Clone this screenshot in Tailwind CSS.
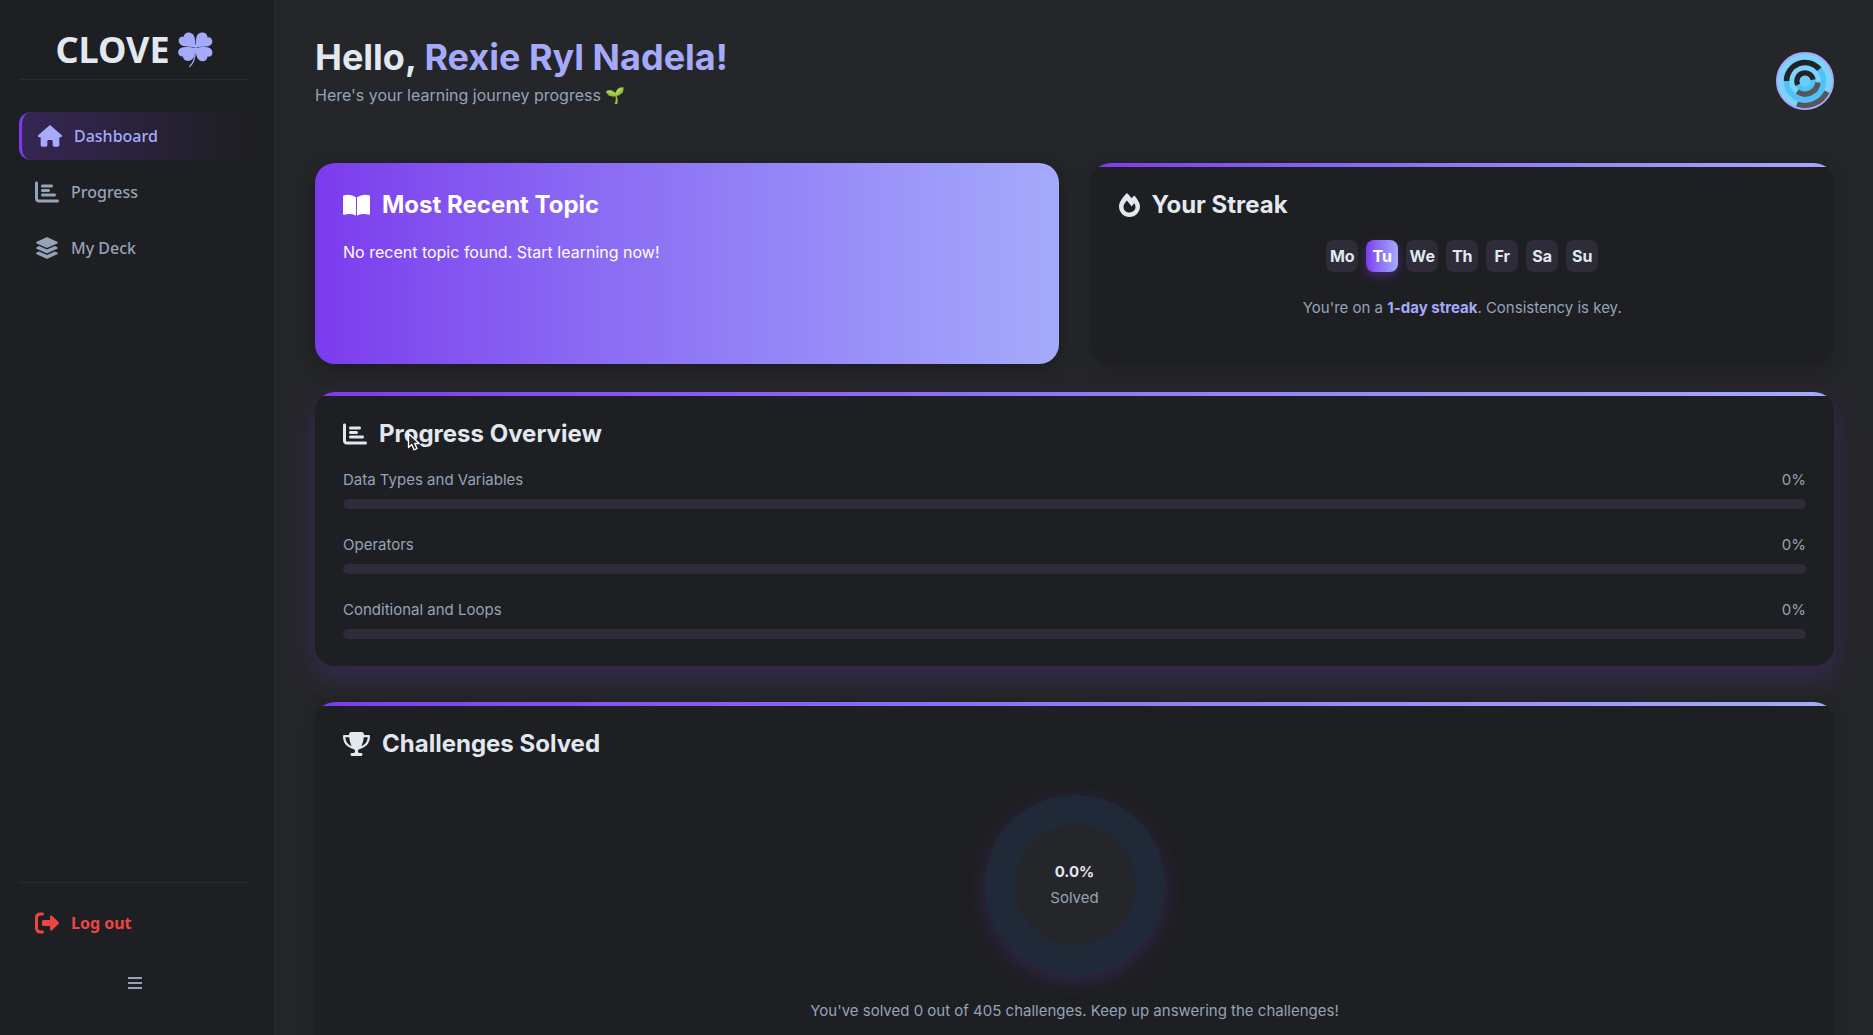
<!DOCTYPE html>
<html lang="en">
<head>
<meta charset="utf-8">
<title>Clove – Dashboard</title>
<script src="https://cdn.jsdelivr.net/npm/@tailwindcss/browser@4"></script>
</head>
<body class="flex h-screen overflow-hidden bg-[#25262a] font-['Inter',sans-serif] text-[#e2e8f0]">

<aside class="flex w-[275px] shrink-0 flex-col border-r border-[#2a2b2f] bg-[#1e1f22] pr-6 pl-[19px] font-['Noto_Sans',sans-serif]">
  <div class="flex h-20 items-center justify-center gap-2 border-b border-[#2a2b2f] pt-5">
    <span class="text-4xl font-bold">CLOVE</span>
    <svg class="size-9" viewBox="0 0 36 36" fill="#a5aafb" aria-hidden="true">
      <path d="M17.300 15.700C13 14.500 7 15.500 3 13C.5 11 0 8 1.500 6C2.500 4.500 4.500 4.500 5.500 5C6 1.500 9 0 12 .7C17.500 2 17.300 8 17.300 15.700Z"/>
      <path d="M17.800 15.700C17.800 8 17.500 2 22.500 .8C26.500 0 29.500 2 29.500 5.500C32 4.800 34 6.500 34.300 9C34.500 13 31 14.500 28 14.500C24 15 21 14.500 17.800 15.700Z"/>
      <path d="M17.300 16.200C13 15 6 14.500 2.500 16.200C-.5 18 -.3 22 1.500 23.500C3 24.700 4.500 24.500 5 24.500C5 27.500 8 29.500 11 28.800C16.500 27.500 17.300 22 17.300 16.200Z"/>
      <path d="M17.800 16.200C21 15 29 14.500 32 16.200C35 18 35 22.500 33 24C31.500 25 30.500 24.500 29.500 24.500C29.500 28 27 29.500 24 29.200C18.500 28.500 17.800 22 17.800 16.200Z"/>
      <path d="M17.500 13V18C17.500 25 15.500 31 11.700 34.500" fill="none" stroke="#a5aafb" stroke-width="1.200" stroke-linecap="round"/>
    </svg>
  </div>

  <nav class="mt-8 flex flex-col gap-2 font-medium text-[#94a3b8]">
    <a href="#dashboard" class="flex h-12 items-center gap-3 rounded-xl border-l-3 border-[#7c3aed] bg-linear-to-r from-[#7c3aed]/25 to-transparent pl-4 text-[#a5aafb]">
      <svg class="h-[22px] w-6" viewBox="0 0 576 512" fill="currentColor" aria-hidden="true"><path d="M575.800 255.500c0 18-15 32.100-32 32.100h-32l.7 160.200c0 2.700-.2 5.400-.5 8.100V472c0 22.100-17.900 40-40 40H416 392c-22.100 0-40-17.900-40-40V448 384c0-17.700-14.300-32-32-32H256c-17.700 0-32 14.300-32 32v64 24c0 22.100-17.900 40-40 40H104c-22.100 0-40-17.900-40-40V287.600H32c-18 0-32-14-32-32.100 0-9 3-17 10-24L266.400 8c7-7 15-8 22-8s15 2 21 7L564.800 231.500c8 7 12 15 11 24z"/></svg>
      Dashboard
    </a>
    <a href="#progress" class="flex h-12 items-center gap-3 pl-4">
      <svg class="size-6" viewBox="0 0 512 512" fill="currentColor" aria-hidden="true"><path d="M32 32c17.700 0 32 14.300 32 32V400c0 8.800 7.200 16 16 16H480c17.700 0 32 14.300 32 32s-14.300 32-32 32H80c-44.200 0-80-35.800-80-80V64C0 46.300 14.300 32 32 32zm96 96c0-17.700 14.300-32 32-32H352c17.700 0 32 14.300 32 32s-14.300 32-32 32H160c-17.700 0-32-14.300-32-32zm32 64H288c17.700 0 32 14.300 32 32s-14.300 32-32 32H160c-17.700 0-32-14.300-32-32s14.300-32 32-32zm0 96H416c17.700 0 32 14.300 32 32s-14.300 32-32 32H160c-17.700 0-32-14.300-32-32s14.300-32 32-32z"/></svg>
      Progress
    </a>
    <a href="#deck" class="flex h-12 items-center gap-3 pl-4">
      <svg class="size-6" viewBox="0 0 512 512" fill="currentColor" aria-hidden="true"><path transform="translate(25 25) scale(.9)" d="M12.410 148.020l232.940 105.670c6.800 3.090 14.490 3.090 21.290 0l232.940-105.670c16.550-7.510 16.550-32.520 0-40.030L266.650 2.310a25.607 25.607 0 0 0-21.290 0L12.410 107.980c-16.550 7.510-16.550 32.530 0 40.040zm487.180 88.280l-58.090-26.330-161.640 73.270c-7.560 3.430-15.590 5.170-23.860 5.170s-16.290-1.740-23.860-5.170L70.510 209.970l-58.100 26.330c-16.550 7.500-16.550 32.500 0 40l232.940 105.590c6.800 3.080 14.490 3.080 21.290 0L499.590 276.300c16.550-7.500 16.550-32.500 0-40zm0 127.800l-57.870-26.230-161.860 73.370c-7.560 3.430-15.590 5.170-23.860 5.170s-16.290-1.740-23.860-5.170L70.290 337.870 12.410 364.100c-16.550 7.500-16.550 32.500 0 40l232.940 105.590c6.800 3.080 14.490 3.080 21.290 0L499.590 404.100c16.550-7.500 16.550-32.500 0-40z"/></svg>
      My Deck
    </a>
  </nav>

  <div class="mt-auto flex flex-col items-center border-t border-[#2a2b2f] pt-4 pb-9">
    <button type="button" class="flex h-12 w-full items-center gap-3 pl-4 font-bold text-[#ef4444]">
      <svg class="size-6" viewBox="0 0 24 24" aria-hidden="true"><path d="M7.500 3H5.500Q1.500 3 1.500 7V17Q1.500 21 5.500 21H7.500" fill="none" stroke="currentColor" stroke-width="3" stroke-linecap="round"/><path d="M8.500 9H15V5.500Q15.500 4 17 4.800L23.500 11Q24.300 12 23.500 13L17 19.200Q15.500 20 15 18.500V15H8.500Q7 15 7 13.500V10.500Q7 9 8.500 9Z" fill="currentColor"/></svg>
      Log out
    </button>
    <button type="button" aria-label="Collapse menu" class="mt-5 flex size-8 items-center justify-center text-[#94a3b8]">
      <svg class="h-3 w-[14px]" viewBox="0 0 14 12" fill="currentColor" aria-hidden="true"><path d="M0 0h14v2H0zM0 5h14v2H0zM0 10h14v2H0z"/></svg>
    </button>
  </div>
</aside>

<main class="min-w-0 flex-1 overflow-hidden pt-8 pr-[39px] pl-10">
  <header class="flex items-start justify-between">
    <div>
      <h1 class="text-4xl leading-[50px] font-bold">Hello, <span class="text-[#a5aafb]">Rexie Ryl Nadela!</span></h1>
      <p class="text-base leading-[26px] text-[#94a3b8]">Here's your learning journey progress 🌱</p>
    </div>
    <svg class="mt-5 size-[58px]" viewBox="0 0 58 58" role="img" aria-label="Profile picture">
      <circle cx="29" cy="29" r="28" fill="#7dd3fc" stroke="#a5aafb" stroke-width="2"/>
      <g fill="none" stroke-width="5.500">
        <path d="M43.300 17.300A18.500 18.500 0 1 1 10.500 29" stroke="#4fc3f7"/>
        <path d="M10.500 29A18.500 18.500 0 0 1 43.300 17.300" stroke="#222326"/>
        <path d="M36.900 27.700A8 8 0 0 1 21.900 32.700" stroke="#4fc3f7"/>
        <path d="M21.900 32.700A8 8 0 1 1 36.900 27.700" stroke="#222326"/>
        <path d="M42 30.400A13 13 0 0 1 21.200 39.400" stroke="#55575c"/>
        <path d="M51 39.800A24.500 24.500 0 0 1 21 52" stroke="#55575c"/>
      </g>
      <circle cx="29" cy="29" r="5.500" fill="#6ccdf9"/>
    </svg>
  </header>

  <div class="mt-[53px] grid grid-cols-2 gap-8">
    <section class="h-[201px] rounded-[20px] bg-linear-to-r from-[#7c3aed] to-[#a5aafb] px-7 pt-6 text-white shadow-[0_4px_20px_rgb(0_0_0/0.3)]">
      <h2 class="flex h-9 items-center gap-3 text-2xl font-bold">
        <svg class="h-6 w-[27px]" viewBox="0 0 27 24" fill="currentColor" aria-hidden="true"><path d="M13 4.200V22.500Q7 20 1.200 21.700Q0 22 0 20.500V3.500Q0 2.500 1 2.200Q8 .500 13 4.200ZM14 4.200Q19 .500 26 2.200Q27 2.500 27 3.500V20.500Q27 22 25.800 21.700Q20 20 14 22.500Z"/></svg>
        Most Recent Topic
      </h2>
      <p class="mt-4 leading-[26px]">No recent topic found. Start learning now!</p>
    </section>

    <section class="h-[201px] overflow-hidden rounded-[20px] bg-[#1e1f22] shadow-[0_4px_20px_rgb(0_0_0/0.2)]">
      <div class="h-1 bg-linear-to-r from-[#7c3aed] to-[#a5aafb]"></div>
      <div class="px-7 pt-5">
        <h2 class="flex h-9 items-center gap-3 text-2xl font-bold">
          <svg class="h-6 w-[21px]" viewBox="0 0 448 512" fill="currentColor" aria-hidden="true"><path d="M323.560 51.200c-20.800 19.300-39.580 39.590-56.220 59.970C240.080 73.620 206.280 35.530 168 0 69.740 91.170 0 209.960 0 281.600 0 408.850 100.290 512 224 512s224-103.150 224-230.400c0-53.270-51.980-163.140-124.440-230.400zm-19.470 340.650C282.430 407.010 255.720 416 226.860 416 154.710 416 96 368.260 96 290.750c0-38.610 24.310-72.630 72.790-130.750 6.930 7.980 98.830 125.340 98.830 125.340l58.630-66.880c4.140 6.850 7.910 13.550 11.270 19.970 27.350 52.190 15.810 118.970-33.430 153.420z"/></svg>
          Your Streak
        </h2>
        <ul class="mt-[17px] flex justify-center gap-2 font-bold">
          <li class="grid size-8 place-items-center rounded-lg bg-[#2d2c38]">Mo</li>
          <li class="grid size-8 place-items-center rounded-lg bg-linear-to-r from-[#7c3aed] to-[#a5aafb] text-white shadow-[0_4px_10px_rgb(124_58_237/0.4)]">Tu</li>
          <li class="grid size-8 place-items-center rounded-lg bg-[#2d2c38]">We</li>
          <li class="grid size-8 place-items-center rounded-lg bg-[#2d2c38]">Th</li>
          <li class="grid size-8 place-items-center rounded-lg bg-[#2d2c38]">Fr</li>
          <li class="grid size-8 place-items-center rounded-lg bg-[#2d2c38]">Sa</li>
          <li class="grid size-8 place-items-center rounded-lg bg-[#2d2c38]">Su</li>
        </ul>
        <p class="mt-6 text-center text-[15px] leading-6 text-[#94a3b8]">You're on a <strong class="font-bold text-[#a5aafb]">1-day streak</strong>. Consistency is key.</p>
      </div>
    </section>
  </div>

  <section class="mt-7 h-[274px] overflow-hidden rounded-[20px] bg-[#1e1f22] shadow-[0_12px_28px_rgb(124_58_237/0.2)]">
    <div class="h-1 bg-linear-to-r from-[#7c3aed] to-[#a5aafb]"></div>
    <div class="px-7 pt-5">
      <div class="relative">
        <h2 class="flex h-9 items-center gap-3 text-2xl font-bold">
          <svg class="size-6" viewBox="0 0 512 512" fill="currentColor" aria-hidden="true"><path d="M32 32c17.700 0 32 14.300 32 32V400c0 8.800 7.200 16 16 16H480c17.700 0 32 14.300 32 32s-14.300 32-32 32H80c-44.200 0-80-35.800-80-80V64C0 46.300 14.300 32 32 32zm96 96c0-17.700 14.300-32 32-32H352c17.700 0 32 14.300 32 32s-14.300 32-32 32H160c-17.700 0-32-14.300-32-32zm32 64H288c17.700 0 32 14.300 32 32s-14.300 32-32 32H160c-17.700 0-32-14.300-32-32s14.300-32 32-32zm0 96H416c17.700 0 32 14.300 32 32s-14.300 32-32 32H160c-17.700 0-32-14.300-32-32s14.300-32 32-32z"/></svg>
          Progress Overview
        </h2>
        <svg class="absolute top-4 left-16 h-5 w-4" viewBox="0 0 16 20" aria-hidden="true"><path d="M1.500 1.500V15.500L4.800 12.500L7 17.800L10 16.500L7.800 11.500H12.300Z" fill="#2b2b2f" stroke="#fff" stroke-width="1.300" stroke-linejoin="round"/></svg>
      </div>
      <div class="mt-4 flex flex-col gap-6 text-[15px] leading-6 text-[#94a3b8]">
        <div>
          <div class="flex justify-between"><span>Data Types and Variables</span><span>0%</span></div>
          <div class="mt-[7px] h-2.5 rounded-full bg-[#2d2c38]" role="progressbar" aria-label="Data Types and Variables" aria-valuenow="0"></div>
        </div>
        <div>
          <div class="flex justify-between"><span>Operators</span><span>0%</span></div>
          <div class="mt-[7px] h-2.5 rounded-full bg-[#2d2c38]" role="progressbar" aria-label="Operators" aria-valuenow="0"></div>
        </div>
        <div>
          <div class="flex justify-between"><span>Conditional and Loops</span><span>0%</span></div>
          <div class="mt-[7px] h-2.5 rounded-full bg-[#2d2c38]" role="progressbar" aria-label="Conditional and Loops" aria-valuenow="0"></div>
        </div>
      </div>
    </div>
  </section>

  <section class="mt-9 overflow-hidden rounded-[20px] bg-[#1e1f22] shadow-[0_4px_20px_rgb(0_0_0/0.2)]">
    <div class="h-1 bg-linear-to-r from-[#7c3aed] to-[#a5aafb]"></div>
    <div class="flex flex-col px-7 pt-5 pb-7">
      <h2 class="flex h-9 items-center gap-3 text-2xl font-bold">
        <svg class="h-6 w-[27px]" viewBox="0 0 576 512" fill="currentColor" aria-hidden="true"><path d="M400 0H176c-26.500 0-48.100 21.800-47.100 48.200c.2 5.300 .4 10.600 .7 15.800H24C10.700 64 0 74.700 0 88c0 92.600 33.500 157 78.500 200.700c44.300 43.100 98.300 64.800 138.100 75.800c23.400 6.500 39.400 26 39.400 45.600c0 20.900-17 37.900-37.900 37.900H192c-17.700 0-32 14.300-32 32s14.300 32 32 32H384c17.700 0 32-14.300 32-32s-14.300-32-32-32H357.900C337 448 320 431 320 410.100c0-19.600 15.900-39.200 39.400-45.600c39.900-11 93.900-32.700 138.200-75.800C542.500 245 576 180.600 576 88c0-13.300-10.700-24-24-24H446.400c.3-5.200 .5-10.400 .7-15.800C448.100 21.800 426.500 0 400 0zM48.900 112h84.400c9.100 90.100 29.200 150.300 51.900 190.600c-24.900-11-50.800-26.500-73.200-48.300c-32-31.100-58-76-63-142.300zM464.100 254.300c-22.400 21.800-48.300 37.300-73.200 48.300c22.700-40.300 42.800-100.500 51.900-190.600h84.400c-5.100 66.300-31.100 111.200-63 142.300z"/></svg>
        Challenges Solved
      </h2>
      <div class="mx-auto mt-[33px] grid size-[180px] place-items-center rounded-full bg-[#1f2937] shadow-[0_6px_20px_rgb(124_58_237/0.2)]">
        <div class="flex size-[120px] flex-col items-center justify-center rounded-full bg-[#25262a] text-[15px] leading-[26px]">
          <strong class="font-bold">0.0%</strong>
          <span class="text-[#94a3b8]">Solved</span>
        </div>
      </div>
      <p class="mt-6 text-center text-[15px] leading-6 text-[#94a3b8]">You've solved 0 out of 405 challenges. Keep up answering the challenges!</p>
    </div>
  </section>
</main>
</body>
</html>
